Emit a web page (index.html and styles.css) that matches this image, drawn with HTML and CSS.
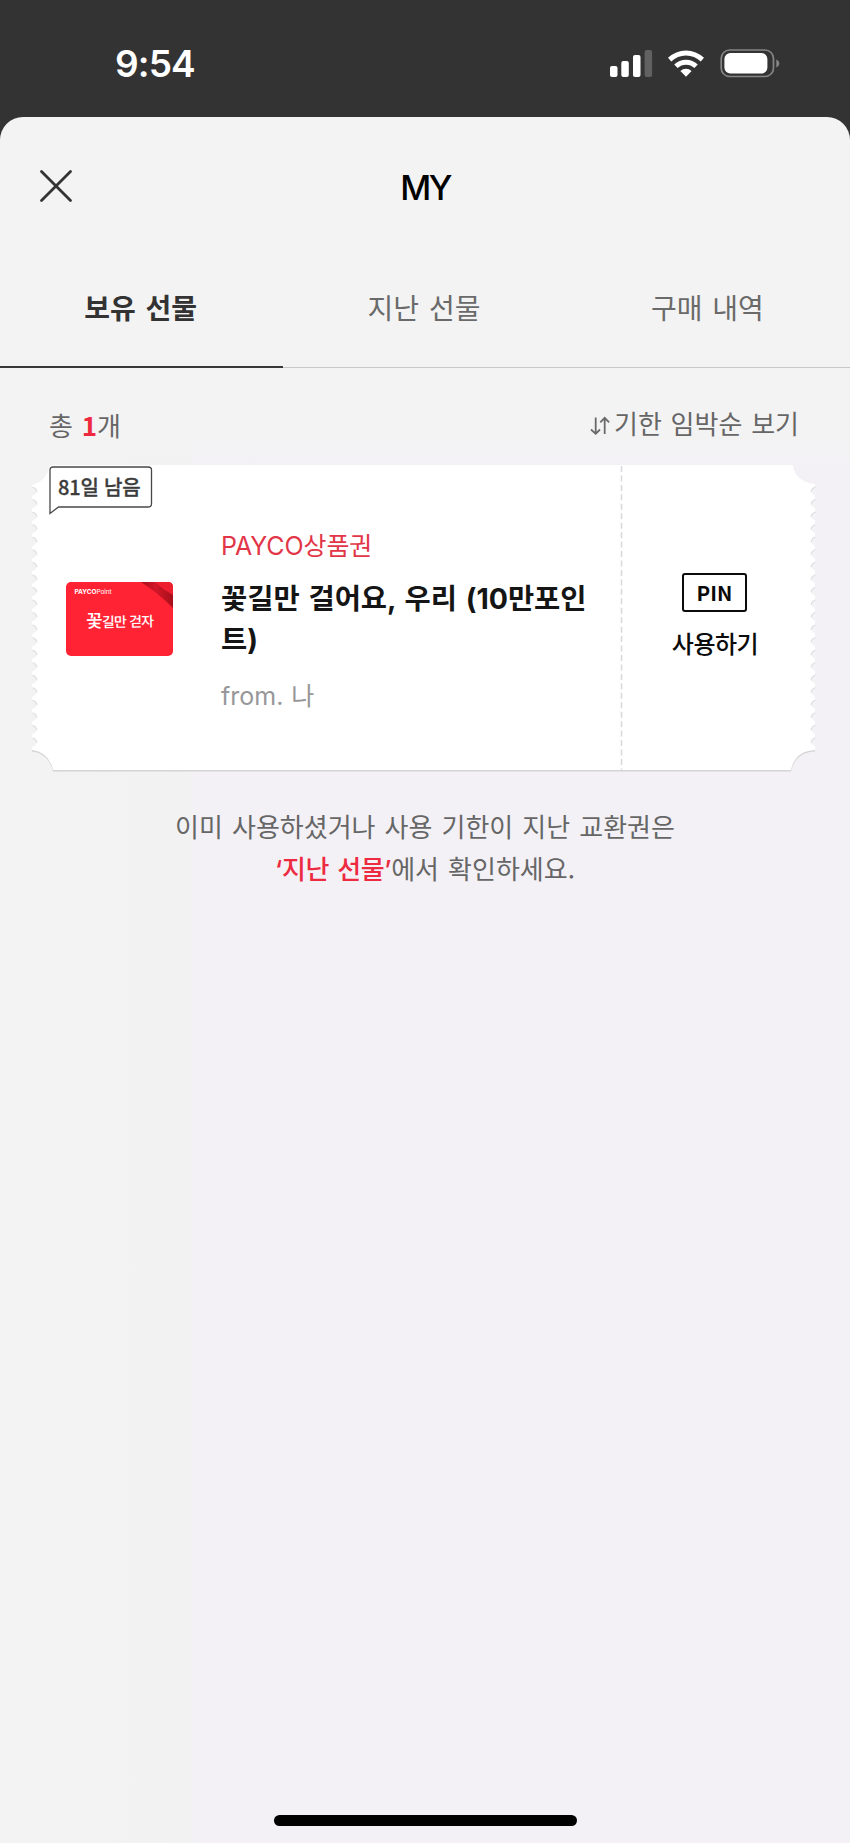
FILE: index.html
```html
<!DOCTYPE html>
<html lang="ko">
<head>
<meta charset="utf-8">
<meta name="viewport" content="width=device-width">
<title>MY</title>
<link rel="stylesheet" href="styles.css">
</head>
<body>
<div class="status">
  <span class="time">9:54</span>
  <svg class="status-icons" width="172" height="30" viewBox="0 0 172 30">
    <g fill="#fff">
      <rect x="0" y="17" width="7.5" height="11" rx="2"/>
      <rect x="11.3" y="12" width="7.5" height="16" rx="2"/>
      <rect x="23" y="6" width="7.5" height="22" rx="2"/>
      <rect x="34.6" y="1" width="7.5" height="27" rx="2" fill="#616161"/>
      <path d="M58 8.800a26 26 0 0 1 36 0l-3.300 3.700a21 21 0 0 0-29.400 0z"/>
      <path d="M64.200 15.400a17.200 17.200 0 0 1 23.600 0l-3.400 3.700a12.200 12.200 0 0 0-16.800 0z"/>
      <path d="M70.400 21.900a8.300 8.300 0 0 1 11.200 0l-5.600 5.800z"/>
      <rect x="114.400" y="4" width="43" height="20.500" rx="6"/>
    </g>
    <rect x="111.200" y="1" width="52.300" height="26.500" rx="8.500" fill="none" stroke="#858585" stroke-width="1.700"/>
    <path d="M166.300 10.500c4 1.800 4 6 0 8z" fill="#858585"/>
  </svg>
</div>
<main class="sheet">
  <header class="header">
    <svg class="close" width="34" height="34" viewBox="0 0 34 34"><path d="M2.500 2.500l29 29M31.500 2.500l-29 29" stroke="#333" stroke-width="2.800" stroke-linecap="round"/></svg>
    <h1 class="title">MY</h1>
  </header>
  <nav class="tabs">
    <a class="tab active">보유 선물</a>
    <a class="tab">지난 선물</a>
    <a class="tab">구매 내역</a>
  </nav>
  <div class="toolbar">
    <span class="count">총 <b>1</b>개</span>
    <span class="sort"><svg width="20" height="20" viewBox="0 0 20 20" fill="none" stroke="#696969" stroke-width="1.800"><path d="M5.700 1.500v16M1 13.500l4.700 4.300 4.300-4.300M14.700 18V2M10.300 6.300l4.400-4.500 4.400 4.500"/></svg>기한 임박순 보기</span>
  </div>
  <section class="ticket">
    <svg class="ticket-shape" width="784" height="308" viewBox="0 0 784 308">
      <defs>
        <pattern id="teethL" x="0" y="20" width="6" height="12.540" patternUnits="userSpaceOnUse"><path d="M0 1.800Q4.500 3 5 7Q3 10.500 0 11z" fill="#f2f2f2"/><path d="M0.500 2.200Q4.200 3 5 7" fill="none" stroke="#dadada"/></pattern>
        <pattern id="teethR" x="778" y="20" width="6" height="12.540" patternUnits="userSpaceOnUse"><path d="M6 1.800Q1.500 3 1 7Q3 10.500 6 11z" fill="#f3f2f5"/><path d="M5.500 2.200Q1.800 3 1 7" fill="none" stroke="#d9d7dc"/></pattern>
      </defs>
      <path class="edge" transform="translate(0 1.500)" d="M18 0H761Q763 17 783 19V285Q763 286 759 305H21Q17 287 0 285V20Q15 16 18 0z"/>
      <path fill="#fff" d="M18 0H761Q763 17 783 19V285Q763 286 759 305H21Q17 287 0 285V20Q15 16 18 0z"/>
      <rect x="0" y="20" width="6" height="263" fill="url(#teethL)"/>
      <rect x="778" y="20" width="6" height="263" fill="url(#teethR)"/>
      <path d="M589.500 1V306" stroke="#dad8dc" stroke-width="1.500" stroke-dasharray="6 3.450"/>
    </svg>
    <div class="badge">
      <svg width="104" height="50" viewBox="0 0 104 50"><path d="M1 47.500V4Q1 1 4 1H99Q102.500 1 102.500 4V38Q102.500 41 99 41H9.500z" fill="#fff" stroke="#48484a" stroke-width="1.300"/></svg>
      <span>81일 남음</span>
    </div>
    <div class="thumb">
      <svg width="107" height="74" viewBox="0 0 107 74">
        <defs><linearGradient id="ribbon"><stop offset="0" stop-color="#a80c18"/><stop offset=".45" stop-color="#d2182a"/><stop offset="1" stop-color="#a90e1a"/></linearGradient></defs>
        <rect width="107" height="74" rx="5" fill="#ff2334"/>
        <path d="M89 0H102Q107 0 107 5V13z" fill="#ee2030"/>
        <path d="M75 0H89Q98 8 107 13V26Q92 11 75 0z" fill="url(#ribbon)"/>
      </svg>
      <span class="brand"><b>PAYCO</b> Point</span>
      <span class="script"><b>꽃</b>길만 걷자</span>
    </div>
    <div class="info">
      <p class="shop">PAYCO상품권</p>
      <h2 class="name">꽃길만 걸어요, 우리 (10만포인트)</h2>
      <p class="from">from. 나</p>
    </div>
    <div class="action">
      <span class="pin">PIN</span>
      <span class="use">사용하기</span>
    </div>
  </section>
  <p class="notice">이미 사용하셨거나 사용 기한이 지난 교환권은<br><em>‘지난 선물’</em>에서 확인하세요.</p>
  <div class="home"></div>
</main>
</body>
</html>
```

FILE: styles.css
```css
* { box-sizing: border-box; margin: 0; padding: 0; }
body {
  width: 850px;
  height: 1843px;
  background: #333;
  font-family: "Noto Sans CJK KR", sans-serif;
  color: #666;
  overflow: hidden;
}
.status {
  height: 117px;
  padding: 0 70px 0 115px;
  display: flex;
  justify-content: space-between;
  align-items: flex-start;
}
.time {
  margin-top: 41px;
  font: 600 37px/45px Inter, sans-serif;
  letter-spacing: -0.9px;
  color: #fff;
}
.status-icons { margin: 49px -2px 0 0; }
.sheet {
  height: 1726px;
  border-radius: 23px 23px 0 0;
  background: linear-gradient(#f3f3f3 0, #f3f3f3 310px, transparent 350px),
    linear-gradient(90deg, #f3f3f3 0, #f3f2f3 190px, #f3f1f5 195px, #f3f1f5 100%);
  display: flex;
  flex-direction: column;
}
.header {
  height: 139px;
  padding: 52px 39px 0;
  display: grid;
  grid-template-columns: 34px 1fr 34px;
  align-items: start;
}
.title {
  margin-top: -2px;
  font: 500 34px/41px Inter, sans-serif;
  letter-spacing: -2.5px;
  text-align: center;
  color: #000;
}
.tabs {
  height: 112px;
  display: grid;
  grid-template-columns: repeat(3, 1fr);
  border-bottom: 1px solid #c8c8c8;
}
.tab {
  padding: 31px 2px 0 0;
  font-size: 28px;
  line-height: 40px;
  word-spacing: 2px;
  text-align: center;
  color: #6a6a6a;
}
.active {
  height: 112px;
  border-bottom: 2px solid #383636;
  font-weight: 700;
  color: #333;
}
.toolbar {
  height: 97px;
  padding: 36px 51px 0 49px;
  display: flex;
  justify-content: space-between;
  font-size: 26px;
  line-height: 38px;
  word-spacing: 1.5px;
}
.count { padding-top: 2px; }
.count b { color: #ee2940; }
.sort { display: flex; }
.sort svg { margin: 12px 4px 0 0; }
.ticket {
  position: relative;
  height: 307px;
  margin: 0 34px 0 32px;
  padding-left: 33px;
  display: grid;
  grid-template-columns: 156px 400px 1fr;
}
.ticket-shape { position: absolute; left: 0; top: 0; }
.edge { fill: #d4d3d5; }
.badge { position: absolute; left: 17px; top: 1px; }
.badge svg { display: block; }
.badge span {
  position: absolute;
  left: 9px;
  top: 7px;
  font-size: 20px;
  line-height: 28px;
  font-weight: 500;
  letter-spacing: -0.2px;
  white-space: nowrap;
  -webkit-text-stroke: 0.3px #3c3c3c;
  color: #3c3c3c;
}
.thumb { position: relative; margin: 117px 0 0 0.5px; height: 74px; color: #fff; }
.brand {
  position: absolute;
  left: 9px;
  top: 6px;
  font: 6.5px/9px Inter, sans-serif;
  letter-spacing: -0.1px;
  word-spacing: -1.5px;
}
.script {
  position: absolute;
  left: 20px;
  top: 26px;
  font-size: 14px;
  font-weight: 500;
  line-height: 22px;
  letter-spacing: -0.8px;
  white-space: nowrap;
  transform: rotate(-1deg);
}
.script b { font-size: 18px; font-weight: 500; }
.info { position: relative; padding-top: 63px; }
.shop {
  font: 25px/36px Inter, "Noto Sans CJK KR", sans-serif;
  letter-spacing: -0.1px;
  color: #e23648;
}
.name {
  margin-top: 14px;
  width: 380px;
  font: 700 28.5px/41px Inter, "Noto Sans CJK KR", sans-serif;
  word-spacing: 2px;
  word-break: break-all;
  color: #151515;
}
.from {
  margin-top: 18px;
  font: 25px/36px Inter, "Noto Sans CJK KR", sans-serif;
  word-spacing: 1px;
  color: #979799;
}
.action {
  position: relative;
  padding: 108px 8px 0 0;
  display: flex;
  flex-direction: column;
  align-items: center;
  color: #0b0b0b;
}
.pin {
  width: 65px;
  height: 39px;
  border: 2px solid #0b0b0b;
  border-radius: 3px;
  font-size: 20.5px;
  line-height: 34px;
  font-weight: 700;
  text-align: center;
}
.use { margin: 14px 0 0 1px; font-size: 24px; line-height: 34px; font-weight: 500; letter-spacing: -0.5px; }
.notice {
  margin-top: 33px;
  font-size: 26px;
  line-height: 42px;
  word-spacing: 1.8px;
  text-align: center;
}
.notice em {
  font-family: Inter, "Noto Sans CJK KR", sans-serif;
  font-style: normal;
  font-weight: 500;
  letter-spacing: -0.4px;
  color: #ed2a40;
}
.home {
  margin: auto auto 17px 274px;
  width: 303px;
  height: 11px;
  border-radius: 6px;
  background: #000;
}
```
